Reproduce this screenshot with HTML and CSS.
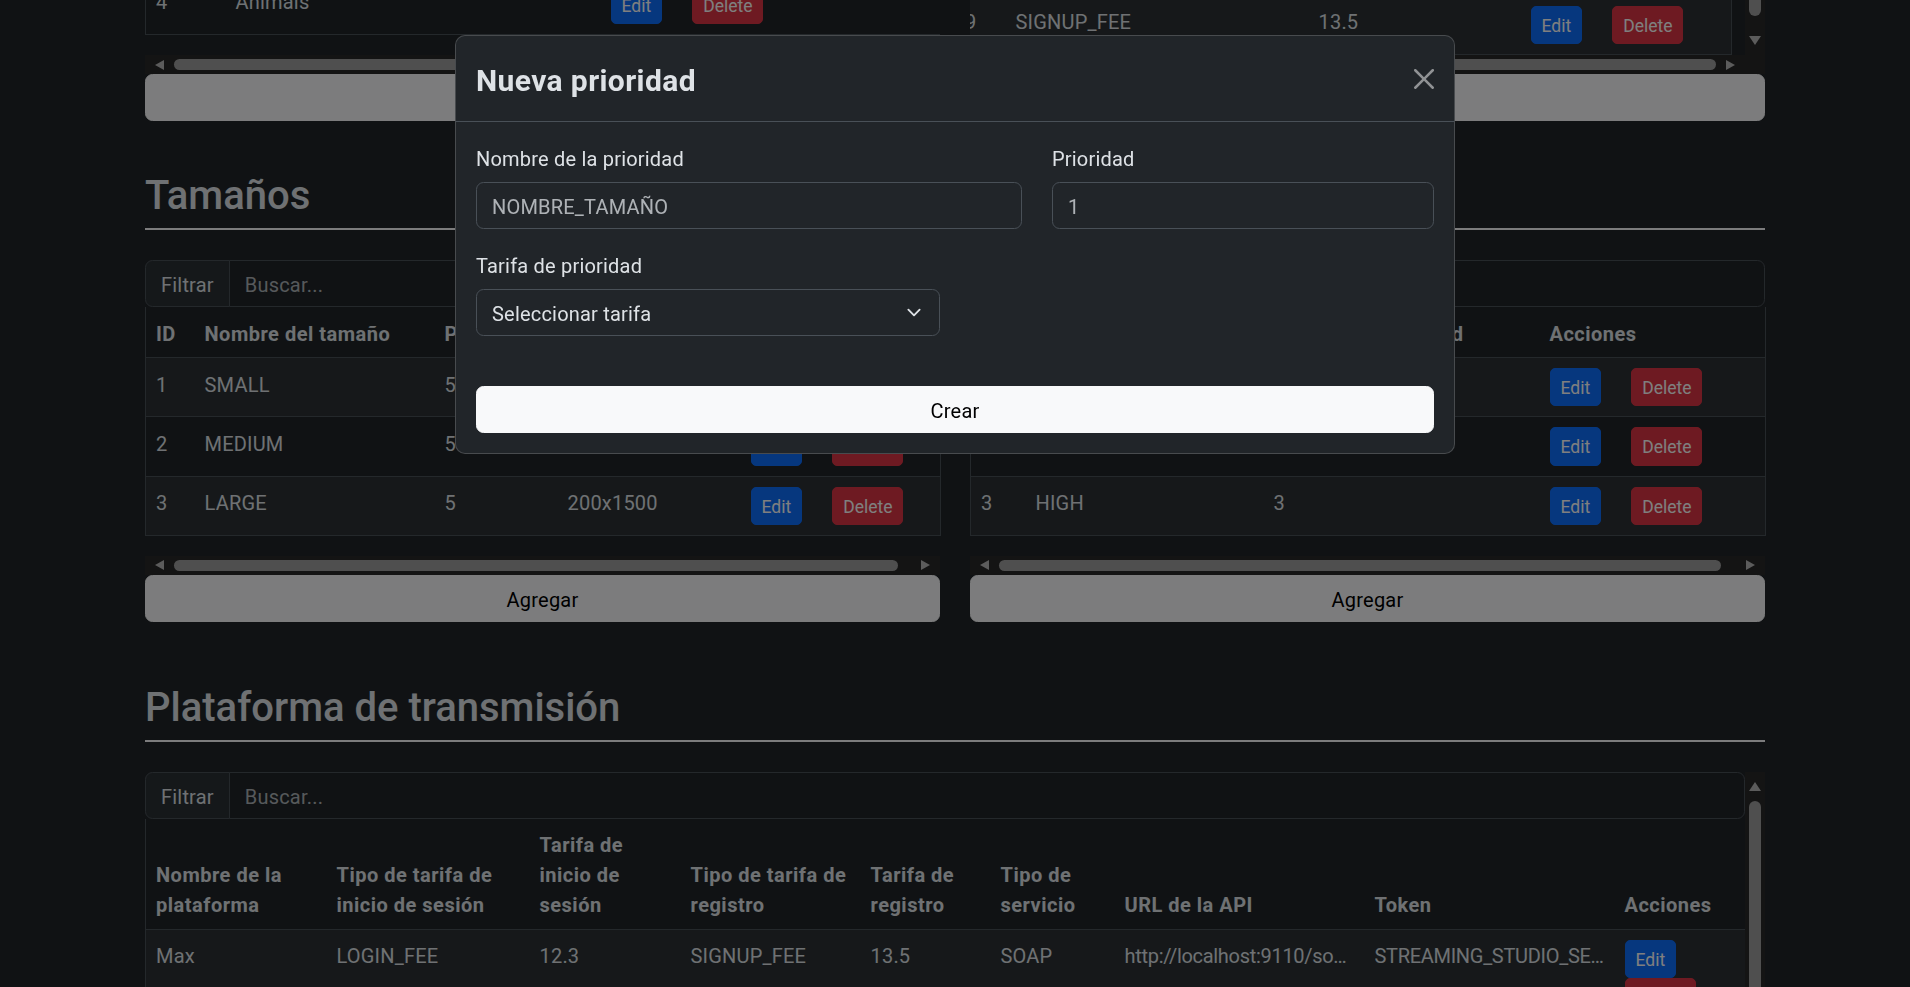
FILE: index.html
```html
<!DOCTYPE html>
<html lang="es">
<head>
<meta charset="utf-8">
<title>Administración - Nueva prioridad</title>
<link rel="stylesheet" href="styles.css">
</head>
<body>
<main class="container">

  <section class="sec-top">
    <div class="row">
      <div class="col">
        <div class="clip clip-l">
          <table class="tbl t-cat">
            <colgroup><col class="cat-id"><col class="cat-name"><col class="cat-act"></colgroup>
            <tbody>
              <tr><td>4</td><td>Animals</td><td class="act"><button class="btn btn-edit">Edit</button><button class="btn btn-del">Delete</button></td></tr>
            </tbody>
          </table>
        </div>
        <div class="hbar">
          <div class="arr"><span class="tri-l"></span></div>
          <div class="track"><div class="thumb-h" style="margin-left:0%;width:98%"></div></div>
          <div class="arr"><span class="tri-r"></span></div>
        </div>
        <button class="btn-add">Agregar</button>
      </div>
      <div class="col">
        <div class="vbox-top">
          <div class="clip clip-r">
            <table class="tbl t-fee">
              <colgroup><col class="fee-id"><col class="fee-name"><col class="fee-val"><col class="fee-act"></colgroup>
              <tbody>
                <tr class="stripe"><td>9</td><td>SIGNUP_FEE</td><td>13.5</td><td class="act"><button class="btn btn-edit">Edit</button><button class="btn btn-del">Delete</button></td></tr>
              </tbody>
            </table>
          </div>
          <div class="vbar vbar-top">
            <div class="thumb-v"></div>
            <div class="arr-v"><span class="tri-d"></span></div>
          </div>
        </div>
        <div class="hbar">
          <div class="arr"><span class="tri-l"></span></div>
          <div class="track"><div class="thumb-h" style="margin-left:2%;width:98%"></div></div>
          <div class="arr"><span class="tri-r"></span></div>
          <div class="corner"></div>
        </div>
        <button class="btn-add">Agregar</button>
      </div>
    </div>
  </section>

  <section class="sec-sizes">
    <h2 class="sec-title">Tamaños</h2>
    <div class="row">
      <div class="col">
        <div class="filter">
          <span class="filter-label">Filtrar</span>
          <input class="filter-input" type="text" placeholder="Buscar...">
        </div>
        <table class="tbl tbl-mb t-size">
          <colgroup><col class="sz-id"><col class="sz-name"><col class="sz-price"><col class="sz-dim"><col class="sz-act"></colgroup>
          <thead>
            <tr><th>ID</th><th>Nombre del tamaño</th><th>Precio</th><th>Dimensiones</th><th>Acciones</th></tr>
          </thead>
          <tbody>
            <tr class="stripe"><td>1</td><td>SMALL</td><td>5</td><td>100x500</td><td class="act"><button class="btn btn-edit">Edit</button><button class="btn btn-del">Delete</button></td></tr>
            <tr><td>2</td><td>MEDIUM</td><td>5</td><td>150x1000</td><td class="act"><button class="btn btn-edit">Edit</button><button class="btn btn-del">Delete</button></td></tr>
            <tr class="stripe"><td>3</td><td>LARGE</td><td>5</td><td>200x1500</td><td class="act"><button class="btn btn-edit">Edit</button><button class="btn btn-del">Delete</button></td></tr>
          </tbody>
        </table>
        <div class="hbar">
          <div class="arr"><span class="tri-l"></span></div>
          <div class="track"><div class="thumb-h" style="margin-left:0%;width:98.2%"></div></div>
          <div class="arr"><span class="tri-r"></span></div>
        </div>
        <button class="btn-add">Agregar</button>
      </div>
      <div class="col">
        <div class="filter">
          <span class="filter-label">Filtrar</span>
          <input class="filter-input" type="text" placeholder="Buscar...">
        </div>
        <table class="tbl tbl-mb t-prio">
          <colgroup><col class="pr-id"><col class="pr-name"><col class="pr-lvl"><col class="pr-act"></colgroup>
          <thead>
            <tr><th>ID</th><th>Nombre de la prioridad</th><th>Nivel de la prioridad</th><th>Acciones</th></tr>
          </thead>
          <tbody>
            <tr class="stripe"><td>1</td><td>LOW</td><td>1</td><td class="act"><button class="btn btn-edit">Edit</button><button class="btn btn-del">Delete</button></td></tr>
            <tr><td>2</td><td>MEDIUM</td><td>2</td><td class="act"><button class="btn btn-edit">Edit</button><button class="btn btn-del">Delete</button></td></tr>
            <tr class="stripe"><td>3</td><td>HIGH</td><td>3</td><td class="act"><button class="btn btn-edit">Edit</button><button class="btn btn-del">Delete</button></td></tr>
          </tbody>
        </table>
        <div class="hbar">
          <div class="arr"><span class="tri-l"></span></div>
          <div class="track"><div class="thumb-h" style="margin-left:0%;width:98%"></div></div>
          <div class="arr"><span class="tri-r"></span></div>
        </div>
        <button class="btn-add">Agregar</button>
      </div>
    </div>
  </section>

  <section class="sec-platform">
    <h2 class="sec-title">Plataforma de transmisión</h2>
    <div class="vbox">
      <div class="vbox-inner">
        <div class="filter">
          <span class="filter-label">Filtrar</span>
          <input class="filter-input" type="text" placeholder="Buscar...">
        </div>
        <table class="tbl t-plat">
          <colgroup>
            <col class="pl-1"><col class="pl-2"><col class="pl-3"><col class="pl-4"><col class="pl-5"><col class="pl-6"><col class="pl-7"><col class="pl-8"><col class="pl-9">
          </colgroup>
          <thead>
            <tr>
              <th>Nombre de la<br>plataforma</th>
              <th>Tipo de tarifa de<br>inicio de sesión</th>
              <th>Tarifa de<br>inicio de<br>sesión</th>
              <th>Tipo de tarifa de<br>registro</th>
              <th>Tarifa de<br>registro</th>
              <th>Tipo de<br>servicio</th>
              <th>URL de la API</th>
              <th>Token</th>
              <th>Acciones</th>
            </tr>
          </thead>
          <tbody>
            <tr class="stripe">
              <td>Max</td>
              <td>LOGIN_FEE</td>
              <td>12.3</td>
              <td>SIGNUP_FEE</td>
              <td>13.5</td>
              <td>SOAP</td>
              <td><div class="trunc">http://localhost:9110/soap/streaming</div></td>
              <td><div class="trunc">STREAMING_STUDIO_SECRET_TOKEN</div></td>
              <td class="act"><button class="btn btn-edit">Edit</button><button class="btn btn-del">Delete</button></td>
            </tr>
          </tbody>
        </table>
      </div>
      <div class="vbar vbar-bottom">
        <div class="arr-v"><span class="tri-u"></span></div>
        <div class="thumb-v"></div>
      </div>
    </div>
  </section>

</main>

<div class="backdrop"></div>

<div class="modal">
  <div class="modal-content">
    <div class="modal-header">
      <h1 class="modal-title">Nueva prioridad</h1>
      <button class="btn-close" type="button" aria-label="Cerrar">
        <svg viewBox="0 0 16 16" width="20" height="20" aria-hidden="true"><path fill="#fff" d="M.293.293a1 1 0 0 1 1.414 0L8 6.586 14.293.293a1 1 0 1 1 1.414 1.414L9.414 8l6.293 6.293a1 1 0 0 1-1.414 1.414L8 9.414l-6.293 6.293a1 1 0 0 1-1.414-1.414L6.586 8 .293 1.707a1 1 0 0 1 0-1.414z"/></svg>
      </button>
    </div>
    <div class="modal-body">
      <form class="form">
        <div class="form-row">
          <div class="field f7">
            <label for="nombre">Nombre de la prioridad</label>
            <input id="nombre" class="form-control" type="text" placeholder="NOMBRE_TAMAÑO">
          </div>
          <div class="field f5">
            <label for="prioridad">Prioridad</label>
            <input id="prioridad" class="form-control" type="text" placeholder="1">
          </div>
        </div>
        <div class="form-row">
          <div class="field f6">
            <label for="tarifa">Tarifa de prioridad</label>
            <div class="form-select">
              <select id="tarifa"><option>Seleccionar tarifa</option></select>
              <svg viewBox="0 0 16 16" width="20" height="15" aria-hidden="true"><path fill="none" stroke="#dee2e6" stroke-linecap="round" stroke-linejoin="round" stroke-width="2" d="m2 5 6 6 6-6"/></svg>
            </div>
          </div>
        </div>
        <button class="btn-create" type="button">Crear</button>
      </form>
    </div>
  </div>
</div>
</body>
</html>
```

FILE: styles.css
```css
* { box-sizing: border-box; }
html, body { margin: 0; height: 100%; }
body {
  background: #212529;
  color: #dee2e6;
  font-family: Roboto, "Segoe UI", "Liberation Sans", sans-serif;
  font-size: 20px;
  line-height: 1.5;
  letter-spacing: .2px;
  overflow: hidden;
}
button, input, select { font: inherit; letter-spacing: inherit; }

.container { width: 1620px; margin: 0 auto; }
.row { display: flex; gap: 30px; }
.col { flex: 1 1 0; min-width: 0; display: flex; flex-direction: column; }

/* top section, scrolled partly out of view */
.clip { overflow: hidden; display: flex; flex-direction: column; justify-content: flex-end; }
.clip-l { height: 35px; margin-bottom: 20px; flex: none; }
.vbox-top { display: flex; height: 55px; flex: none; }
.clip-r { flex: 1; min-width: 0; height: 55px; }
.clip-r .tbl { width: 777px; margin-left: -16px; flex: none; }

/* section titles */
.sec-title {
  margin: 0 0 30px;
  font-size: 40px;
  line-height: 1.2;
  font-weight: 500;
  letter-spacing: 0;
  padding-bottom: 8px;
  border-bottom: 2px solid #f8f9fa;
}
.sec-sizes { margin-top: 51px; }
.sec-platform { margin-top: 62px; }

/* filter input group */
.filter { display: flex; height: 47px; flex: none; }
.filter-label {
  flex: none;
  padding: 9px 15px 6px;
  background: #2b3035;
  border: 1px solid #495057;
  border-radius: 7.5px 0 0 7.5px;
}
.filter-input {
  flex: 1;
  min-width: 0;
  height: 47px;
  margin: 0 0 0 -1px;
  padding: 9px 15px 6px;
  color: #dee2e6;
  background: #212529;
  border: 1px solid #495057;
  border-radius: 0 7.5px 7.5px 0;
  outline: none;
}
.filter-input::placeholder { color: rgba(222, 226, 230, .75); }

/* tables */
.tbl {
  width: 100%;
  border-collapse: collapse;
  table-layout: fixed;
  border: 1px solid #495057;
  border-top: 0;
  flex: none;
}
.tbl th, .tbl td {
  padding: 11.5px 10px 8.5px;
  text-align: left;
  vertical-align: top;
  border-bottom: 1px solid #495057;
  font-weight: 400;
}
.tbl td.act { padding: 10px; }
.tbl th { font-weight: 700; vertical-align: bottom; white-space: nowrap; letter-spacing: .5px; }
.tbl tr.stripe > td { background: #2c3034; }
.tbl-mb { margin-bottom: 20px; }

.cat-id { width: 80px; } .cat-name { width: 375px; } .cat-act { width: 340px; }
.fee-id { width: 51px; } .fee-name { width: 303px; } .fee-val { width: 212px; } .fee-act { width: 211px; }
.sz-id { width: 49px; } .sz-name { width: 240px; } .sz-price { width: 123px; } .sz-dim { width: 183px; } .sz-act { width: 200px; }
.pr-id { width: 55px; } .pr-name { width: 238px; } .pr-lvl { width: 276px; } .pr-act { width: 226px; }
.pl-1 { width: 181px; } .pl-2 { width: 203px; } .pl-3 { width: 151px; } .pl-4 { width: 180px; } .pl-5 { width: 130px; }
.pl-6 { width: 124px; } .pl-7 { width: 250px; } .pl-8 { width: 250px; } .pl-9 { width: 131px; }

.trunc { width: 230px; overflow: hidden; white-space: nowrap; text-overflow: ellipsis; letter-spacing: -.3px; }

/* buttons */
.btn {
  display: inline-block;
  vertical-align: baseline;
  padding: 6px 10px 4px;
  font-size: 17.5px;
  line-height: 1.5;
  letter-spacing: 0;
  border-radius: 5px;
  border: 1px solid transparent;
  color: #fff;
}
.btn-edit { background: #0d6efd; border-color: #0d6efd; margin-right: 30px; }
.btn-del { background: #dc3545; border-color: #dc3545; }
.btn-add {
  display: block;
  width: 100%;
  height: 47px;
  flex: none;
  padding: 9px 15px 6px;
  background: #f8f9fa;
  border: 1px solid #f8f9fa;
  border-radius: 7.5px;
  color: #000;
}

/* drawn scrollbars */
.hbar { display: flex; height: 19px; background: #282828; flex: none; }
.arr { flex: none; width: 29px; display: flex; align-items: center; justify-content: center; }
.tri-l, .tri-r, .tri-u, .tri-d { width: 0; height: 0; display: block; }
.tri-l { border-top: 5.5px solid transparent; border-bottom: 5.5px solid transparent; border-right: 9px solid #b8b8b8; }
.tri-r { border-top: 5.5px solid transparent; border-bottom: 5.5px solid transparent; border-left: 9px solid #b8b8b8; }
.tri-u { border-left: 6px solid transparent; border-right: 6px solid transparent; border-bottom: 9px solid #b8b8b8; }
.tri-d { border-left: 6px solid transparent; border-right: 6px solid transparent; border-top: 9px solid #b8b8b8; }
.track { flex: 1; min-width: 0; display: flex; align-items: center; }
.thumb-h { height: 11px; border-radius: 6px; background: #9e9e9e; }
.corner { width: 20px; flex: none; background: #282828; }

.vbar {
  width: 20px;
  flex: none;
  background: #282828;
  display: flex;
  flex-direction: column;
  align-items: center;
  overflow: hidden;
}
.vbar-top { justify-content: flex-end; }
.arr-v { flex: none; width: 20px; height: 29px; display: flex; align-items: center; justify-content: center; }
.thumb-v { width: 12px; border-radius: 6px; background: #9e9e9e; }
.vbar-top .thumb-v { height: 60px; flex: none; margin-bottom: 10px; }
.vbar-bottom .thumb-v { flex: 1; }

.vbox { display: flex; }
.vbox-inner { flex: 1; min-width: 0; }

/* modal */
.backdrop { position: fixed; inset: 0; background: rgba(0, 0, 0, .5); }
.modal {
  position: fixed;
  inset: 0;
  display: flex;
  justify-content: center;
  align-items: flex-start;
  padding-top: 35px;
}
.modal-content {
  width: 1000px;
  background: #212529;
  border: 1px solid rgba(255, 255, 255, .175);
  border-radius: 10px;
}
.modal-header {
  display: flex;
  align-items: center;
  justify-content: space-between;
  padding: 20px;
  border-bottom: 1px solid #495057;
}
.modal-title {
  margin: 0 0 -2px;
  padding-top: 2px;
  font-size: 30px;
  line-height: 1.5;
  font-weight: 700;
  letter-spacing: .4px;
  color: #dee2e6;
}
.btn-close {
  width: 20px;
  height: 20px;
  padding: 0;
  border: 0;
  background: none;
  opacity: .5;
  display: flex;
}
.modal-body { padding: 20px; }
.form { margin: 0; }
.form-row { display: flex; gap: 30px; margin-bottom: 20px; }
.f7 { width: 546px; }
.f5 { width: 382px; }
.f6 { width: 464px; }
.field label { display: block; padding-top: 1.5px; margin-bottom: 8.5px; }
.form-control {
  display: block;
  width: 100%;
  height: 47px;
  padding: 9px 15px 6px;
  color: #dee2e6;
  background: #212529;
  border: 1px solid #495057;
  border-radius: 7.5px;
  outline: none;
}
.form-control::placeholder { color: rgba(222, 226, 230, .75); }
.form-select {
  display: flex;
  align-items: center;
  height: 47px;
  background: #212529;
  border: 1px solid #495057;
  border-radius: 7.5px;
}
.form-select select {
  flex: 1;
  min-width: 0;
  height: 45px;
  padding: 3px 15px 0;
  appearance: none;
  -webkit-appearance: none;
  background: transparent;
  border: 0;
  color: #dee2e6;
  outline: none;
}
.form-select svg { flex: none; margin-right: 15px; }
.btn-create {
  display: block;
  width: 100%;
  height: 47px;
  margin-top: 50px;
  padding: 9px 15px 6px;
  background: #f8f9fa;
  border: 1px solid #f8f9fa;
  border-radius: 7.5px;
  color: #000;
}
```
